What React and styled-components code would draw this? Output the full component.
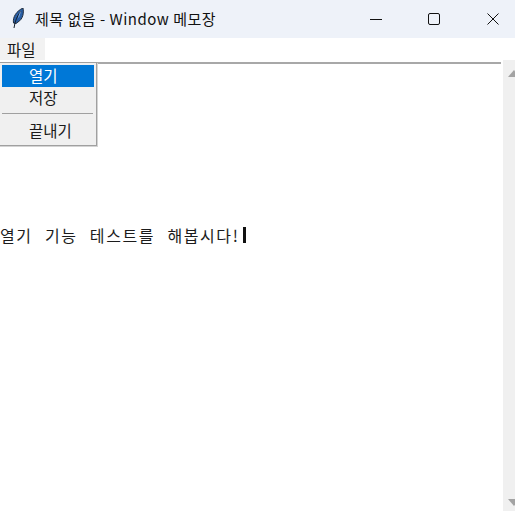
import styled, { createGlobalStyle } from "styled-components";

const GlobalStyle = createGlobalStyle`
  html, body {
    margin: 0;
    padding: 0;
    background: #fff;
  }
`;

const FONT = `"Noto Sans CJK KR", "Noto Sans", sans-serif`;

const Window = styled.div`
  position: relative;
  width: 515px;
  height: 511px;
  display: flex;
  flex-direction: column;
  overflow: hidden;
  font-family: ${FONT};
  color: #1a1a1a;
  background: #fff;
`;

const TitleBar = styled.div`
  flex: none;
  height: 38px;
  display: flex;
  align-items: center;
  background: #eef2f9;
`;

const AppIcon = styled.svg`
  width: 12px;
  height: 20px;
  margin: -2px 11px 0 12px;
`;

const Title = styled.div`
  flex: 1;
  font-size: 15px;
  letter-spacing: 0.5px;
  line-height: 20px;
  color: #111;
`;

const WindowButton = styled.div`
  width: 44px;
  height: 38px;
  margin-left: ${(p) => p.$gap}px;
  display: flex;
  align-items: center;
  justify-content: center;
`;

const MenuBar = styled.div`
  flex: none;
  height: 24px;
  display: flex;
  background: #fff;
`;

const MenuItem = styled.div`
  width: 45px;
  height: 22px;
  padding-left: 7px;
  box-sizing: border-box;
  font-size: 15.5px;
  line-height: 22px;
  background: #f2f2f2;
`;

const Body = styled.div`
  flex: 1;
  display: flex;
  min-height: 0;
`;

const EditorPane = styled.div`
  flex: 1;
  padding-right: 2px;
`;

const Editor = styled.div`
  border-top: 2px solid #a8a8a8;
  padding-top: 161px;
`;

const EditorLine = styled.div`
  display: flex;
  align-items: center;
  height: 20px;
  font-size: 16px;
  letter-spacing: 1.6px;
  word-spacing: 7.1px;
  white-space: pre;
  color: #1c1c1c;
`;

const Caret = styled.span`
  width: 3px;
  height: 16px;
  margin-left: 4px;
  background: #111;
`;

const ScrollBar = styled.div`
  flex: none;
  width: 12px;
  margin-top: -2px;
  padding: 10px 0 5px 5px;
  box-sizing: border-box;
  display: flex;
  flex-direction: column;
  justify-content: space-between;
  overflow: hidden;
  background: #f0f0f0;
`;

const Arrow = styled.svg`
  flex: none;
  width: 12px;
  height: 7px;
`;

const Dropdown = styled.div`
  position: absolute;
  left: -1px;
  top: 62px;
  width: 98px;
  height: 84px;
  box-sizing: border-box;
  padding: 2px;
  background: #f0f0f0;
  border: 1px solid #a0a0a0;
  box-shadow: 1px 1px 0 #d4d4d4;
  font-size: 15.5px;
`;

const DropdownItem = styled.div`
  height: 22px;
  padding-left: 27px;
  line-height: 21px;
  background: ${(p) => (p.$active ? "#0078d7" : "transparent")};
  color: ${(p) => (p.$active ? "#fff" : "#1a1a1a")};
`;

const Separator = styled.div`
  height: 1px;
  margin: 4px 1px 6px 0;
  background: #a0a0a0;
`;

export default function App() {
  return (
    <>
      <GlobalStyle />
      <Window>
        <TitleBar>
          <AppIcon viewBox="0 0 12 20">
            <path d="M1.5 15C0.5 9 4.5 3 11 0c1 5 0 11-5 14l-2 1.5z" fill="#2a5fa6" stroke="#1e2c3d" strokeWidth="1" />
            <path d="M2 20C3 13 5 8 9 3" fill="none" stroke="#15202c" strokeWidth="1" />
            <path d="M8.5 3.5l-2 6" fill="none" stroke="#8fb8e6" strokeWidth="0.8" />
          </AppIcon>
          <Title>제목 없음 - Window 메모장</Title>
          <WindowButton $gap={0}>
            <svg width="12" height="12" viewBox="0 0 12 12">
              <path d="M0 6.5h12" stroke="#111" strokeWidth="1" />
            </svg>
          </WindowButton>
          <WindowButton $gap={14}>
            <svg width="12" height="12" viewBox="0 0 12 12">
              <rect x="0.5" y="0.5" width="11" height="11" rx="1.5" fill="none" stroke="#111" />
            </svg>
          </WindowButton>
          <WindowButton $gap={15}>
            <svg width="12" height="12" viewBox="0 0 12 12">
              <path d="M0.5 0.5l11 11M11.5 0.5l-11 11" stroke="#111" strokeWidth="1" />
            </svg>
          </WindowButton>
        </TitleBar>
        <MenuBar>
          <MenuItem>파일</MenuItem>
        </MenuBar>
        <Body>
          <EditorPane>
            <Editor>
              <EditorLine>
                열기 기능 테스트를 해봅시다!
                <Caret />
              </EditorLine>
            </Editor>
          </EditorPane>
          <ScrollBar>
            <Arrow viewBox="0 0 12 7">
              <path d="M6 0l6 7H0z" fill="#a3a3a3" />
            </Arrow>
            <Arrow viewBox="0 0 12 7">
              <path d="M6 7L0 0h12z" fill="#a3a3a3" />
            </Arrow>
          </ScrollBar>
        </Body>
        <Dropdown>
          <DropdownItem $active>열기</DropdownItem>
          <DropdownItem>저장</DropdownItem>
          <Separator />
          <DropdownItem>끝내기</DropdownItem>
        </Dropdown>
      </Window>
    </>
  );
}
